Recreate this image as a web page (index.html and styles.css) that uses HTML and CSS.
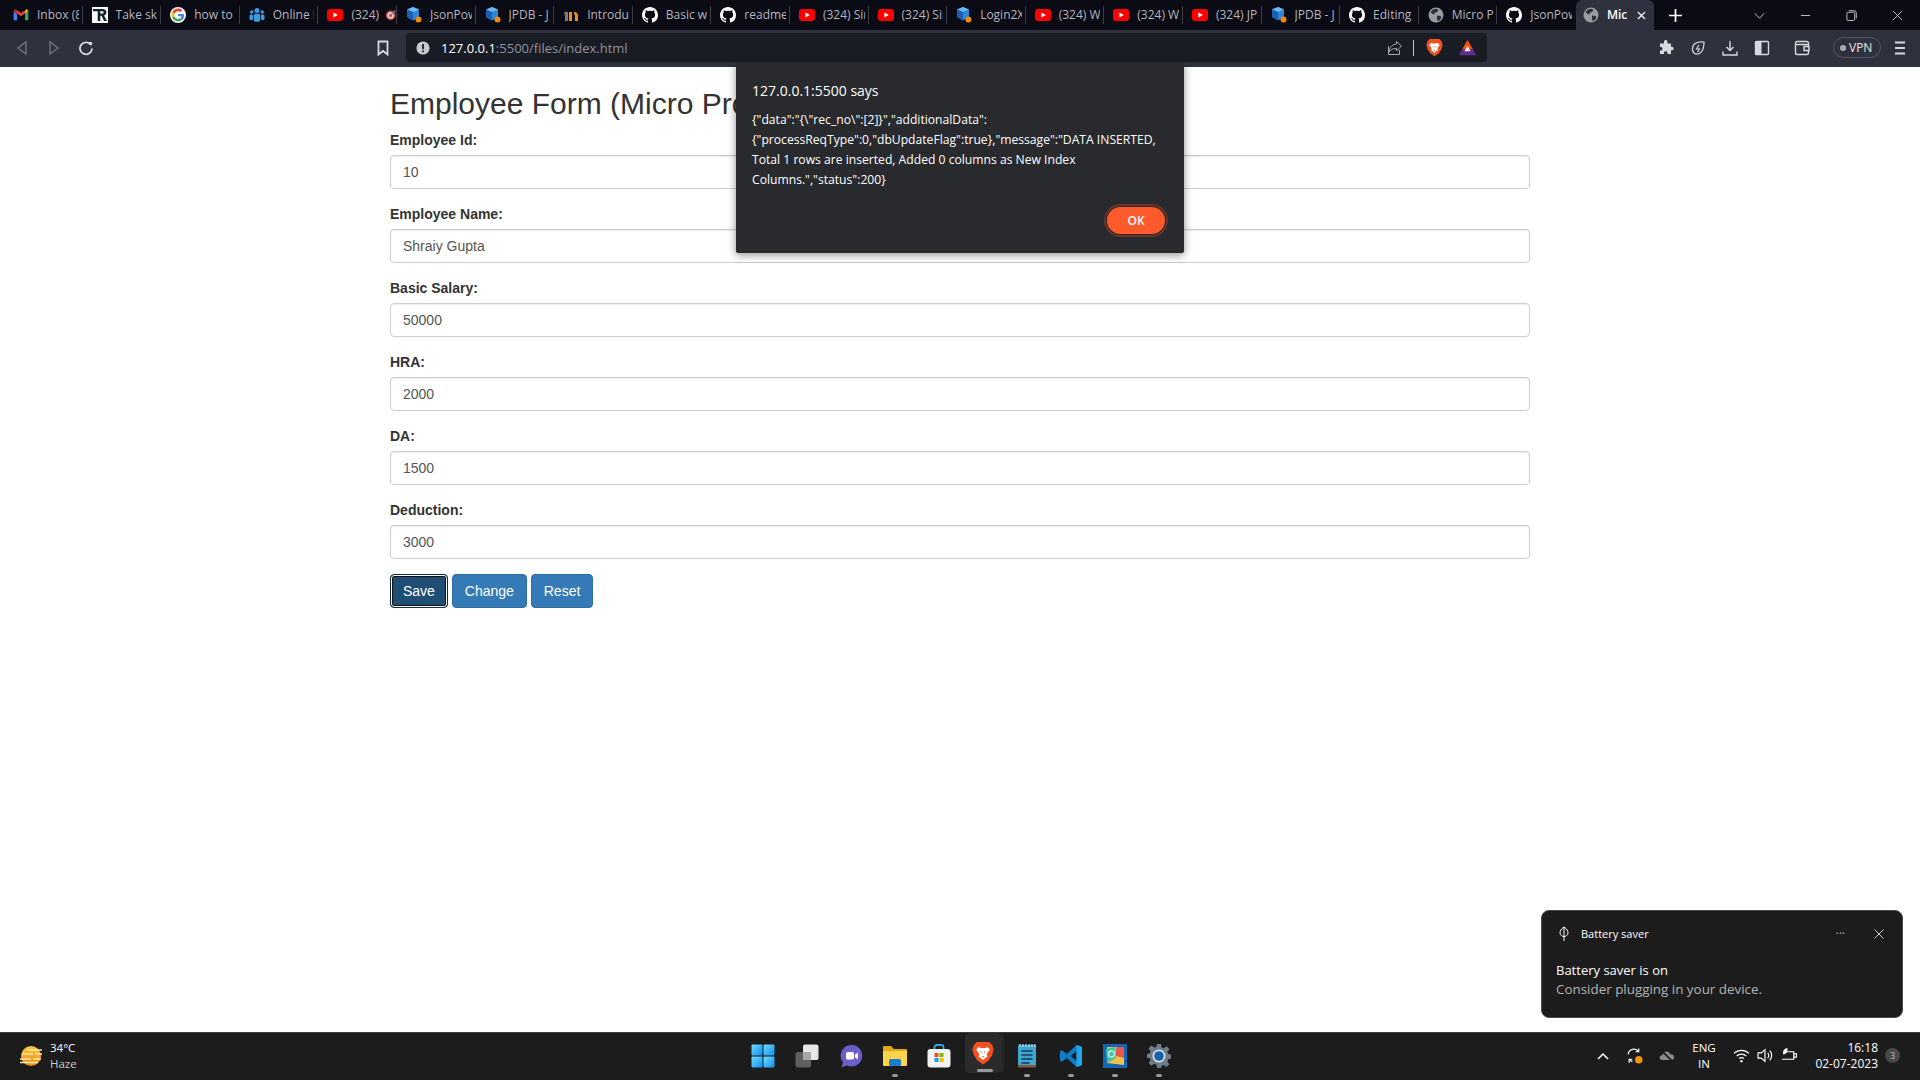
FILE: index.html
```html
<!DOCTYPE html>
<html lang="en">
<head>
<meta charset="UTF-8">
<title>Micro Project</title>
<link rel="stylesheet" href="styles.css">
</head>
<body>
<svg class="defs" width="0" height="0">
    <symbol id="gmail" viewBox="0 0 24 24">
        <path fill="#4285f4" d="M1 6v14h5V10z"/>
        <path fill="#34a853" d="M18 10v10h5V6z"/>
        <path fill="#ea4335" d="M1 6l11 8 11-8-2.5-2.5L12 9 3.500 3.500z"/>
        <path fill="#fbbc04" d="M18 6.500V10l5-4-2.500-2.500z"/>
        <path fill="#c5221f" d="M1 6l5 4V6.500L3.500 3.500z"/>
    </symbol>
    <symbol id="rtile" viewBox="0 0 16 16">
        <rect width="16" height="16" fill="#fff"/>
        <path fill="#10242f" d="M1 2h9.500c2.500 0 4 1.300 4 3.300 0 1.600-1 2.700-2.400 3.100L15 14h-3l-2.500-5.300H8.300V14H5.700V4.300H1zm7.300 2.300v2.300h1.800c.9 0 1.500-.4 1.500-1.200 0-.7-.6-1.100-1.500-1.100z"/>
    </symbol>
    <symbol id="google" viewBox="-6 -6 60 60">
        <circle cx="24" cy="24" r="30" fill="#fff"/>
        <path fill="#ea4335" d="M24 9.500c3.540 0 6.710 1.220 9.210 3.600l6.850-6.850C35.900 2.380 30.470 0 24 0 14.620 0 6.510 5.380 2.560 13.220l7.980 6.190C12.430 13.720 17.740 9.500 24 9.500z"/>
        <path fill="#4285f4" d="M46.980 24.550c0-1.570-.15-3.090-.38-4.550H24v9.020h12.940c-.58 2.960-2.260 5.480-4.780 7.180l7.730 6c4.510-4.180 7.090-10.360 7.090-17.650z"/>
        <path fill="#fbbc05" d="M10.530 28.590c-.48-1.450-.76-2.990-.76-4.590s.27-3.140.76-4.590l-7.980-6.190C.92 16.460 0 20.120 0 24c0 3.880.92 7.540 2.560 10.780l7.970-6.190z"/>
        <path fill="#34a853" d="M24 48c6.480 0 11.930-2.130 15.890-5.810l-7.730-6c-2.150 1.450-4.920 2.300-8.160 2.300-6.260 0-11.570-4.220-13.470-9.910l-7.980 6.190C6.510 42.620 14.620 48 24 48z"/>
    </symbol>
    <symbol id="group" viewBox="0 0 16 16">
        <g fill="#3d9be0">
            <circle cx="8" cy="3.500" r="2.500"/>
            <circle cx="2.800" cy="5" r="1.800"/>
            <circle cx="13.200" cy="5" r="1.800"/>
            <rect x="4.800" y="6.800" width="6.400" height="8" rx="1.800"/>
            <rect x="0.500" y="7.500" width="3.500" height="5.500" rx="1.200"/>
            <rect x="12" y="7.500" width="3.500" height="5.500" rx="1.200"/>
        </g>
    </symbol>
    <symbol id="youtube" viewBox="0 0 16 12">
        <rect width="16" height="12" rx="3" fill="#f00"/>
        <path fill="#fff" d="M6.400 3.400 10.800 6l-4.400 2.600z"/>
    </symbol>
    <symbol id="target" viewBox="0 0 16 16">
        <circle cx="7.500" cy="8.500" r="6.500" fill="#c8473f"/>
        <circle cx="7.500" cy="8.500" r="4.200" fill="#e8e4dc"/>
        <circle cx="7.500" cy="8.500" r="2.200" fill="#c8473f"/>
        <path d="M8 8l6-6" stroke="#4d8fb0" stroke-width="1.600"/>
    </symbol>
    <symbol id="cube" viewBox="0 0 16 16">
        <path fill="#2f86d8" d="M7 0l6 2.500V10l-6 3.500L1 10V2.500z"/>
        <path fill="#6cb8f0" d="M7 0l6 2.500L7 5 1 2.500z"/>
        <path fill="#1c5fb0" d="M7 5v8.500L1 10V2.500z"/>
        <circle cx="12.500" cy="12.500" r="3" fill="#f08a10"/>
    </symbol>
    <symbol id="intro" viewBox="0 0 16 16">
        <path fill="#f28a1e" d="M6 5h3v9H6zm5 0c2 0 4 1 4 3.500V14h-3V9c0-1-.5-1.500-1-1.500z"/>
        <path fill="#7a7a7a" d="M1 6.500C1 5 2.500 4.500 5 5v9H2V7.500z"/>
    </symbol>
    <symbol id="github" viewBox="0 0 16 16">
        <path fill="#fff" d="M8 0C3.580 0 0 3.580 0 8c0 3.540 2.290 6.530 5.470 7.590.4.070.55-.17.55-.38 0-.19-.01-.82-.01-1.490-2.010.37-2.530-.49-2.690-.94-.09-.23-.48-.94-.82-1.130-.28-.15-.68-.52-.01-.53.63-.01 1.080.58 1.230.82.72 1.210 1.870.87 2.330.66.070-.52.280-.87.510-1.070-1.780-.2-3.640-.89-3.640-3.950 0-.87.310-1.590.820-2.150-.080-.2-.360-1.020.080-2.120 0 0 .67-.21 2.200.82.640-.18 1.320-.27 2-.27.680 0 1.360.090 2 .27 1.530-1.040 2.200-.82 2.200-.82.440 1.100.160 1.920.080 2.120.510.560.820 1.270.820 2.150 0 3.070-1.870 3.750-3.650 3.950.290.250.540.730.540 1.480 0 1.070-.010 1.930-.010 2.200 0 .210.150.460.550.380A8.013 8.013 0 0016 8c0-4.420-3.580-8-8-8z"/>
    </symbol>
    <symbol id="globe" viewBox="0 0 16 16">
        <circle cx="8" cy="8" r="7.500" fill="#9a9ca4"/>
        <path fill="#2c2e38" d="M5 2.500l3.500-.7 2 1.200-1.500 2-2 .5-.5 2-2.500-1L2.500 5zM9 8.500l3.500.5 1 1.500-2 3-2 .5-.5-3z"/>
    </symbol>
    <symbol id="lion" viewBox="0 0 24 26">
        <path fill="#f1501f" d="M5 1h14l3 3.500L23.500 9l-1.700 6.500L18 21l-6 4.500L6 21l-3.800-5.500L.5 9 2 4.500z"/>
        <path fill="#fff" d="M7 6.500l2.500 1h5l2.500-1 2.300 2.800-2.600 3.800-.7 1.900 1 1.500L12 20.500 7 16.500l1-1.500-.7-1.900-2.600-3.800z"/>
        <path fill="#f1501f" d="M9.500 11l1.800 1-.8 1.200zM14.500 11l-1.800 1 .8 1.200zM10.300 16.500h3.400L12 18z"/>
    </symbol>
    <symbol id="bat" viewBox="0 0 24 22">
        <path fill="#662d91" d="M12 0 24 21H0z"/>
        <path fill="#ff5000" d="M12 0l7 12.500H5z"/>
        <path fill="#fff" d="M12 8l4 7.500H8z"/>
    </symbol>
    <symbol id="windows" viewBox="0 0 24 24">
        <defs>
            <linearGradient id="wg" x1="0" y1="0" x2="1" y2="1">
                <stop offset="0" stop-color="#6fdcff"/>
                <stop offset="1" stop-color="#0f8ff0"/>
            </linearGradient>
        </defs>
        <rect x="0.500" y="0.500" width="11" height="11" rx="1" fill="url(#wg)"/>
        <rect x="12.500" y="0.500" width="11" height="11" rx="1" fill="url(#wg)"/>
        <rect x="0.500" y="12.500" width="11" height="11" rx="1" fill="url(#wg)"/>
        <rect x="12.500" y="12.500" width="11" height="11" rx="1" fill="url(#wg)"/>
    </symbol>
    <symbol id="taskview" viewBox="0 0 24 24">
        <rect x="0.500" y="8" width="15.500" height="15.500" rx="2" fill="#5f5f5f"/>
        <rect x="8" y="0.500" width="15.500" height="15.500" rx="2" fill="#e6e6e6"/>
        <rect x="8" y="8" width="8" height="8" fill="#a8a8a8"/>
    </symbol>
    <symbol id="chat" viewBox="0 0 24 24">
        <path fill="#6a5fc8" d="M12.500 1a10.800 10.800 0 1 1-4.800 20.500L2.500 23.500l1.500-5A10.800 10.800 0 0 1 12.500 1z"/>
        <rect x="7" y="8" width="8" height="7.500" rx="1.500" fill="#fff"/>
        <path fill="#fff" d="M16 10.500l3-2v7l-3-2z"/>
    </symbol>
    <symbol id="folder" viewBox="0 0 24 24">
        <path fill="#e3a617" d="M0 3a1 1 0 0 1 1-1h7l3 3h12a1 1 0 0 1 1 1v3H0z"/>
        <path fill="#fbd34c" d="M0 7h24v14a1 1 0 0 1-1 1H1a1 1 0 0 1-1-1z"/>
        <rect x="6" y="15" width="12" height="7" rx="1.500" fill="#1a7fd0"/>
    </symbol>
    <symbol id="store" viewBox="0 0 24 24">
        <path fill="none" stroke="#2da5e8" stroke-width="1.800" d="M7.500 6V3a2 2 0 0 1 2-2h5a2 2 0 0 1 2 2v3"/>
        <rect x="0.500" y="5" width="23" height="18.500" rx="3" fill="#f2f2f2"/>
        <rect x="7.500" y="9" width="4" height="4" fill="#f25022"/>
        <rect x="12.500" y="9" width="4" height="4" fill="#7fba00"/>
        <rect x="7.500" y="14" width="4" height="4" fill="#00a4ef"/>
        <rect x="12.500" y="14" width="4" height="4" fill="#ffb900"/>
    </symbol>
    <symbol id="notepad" viewBox="0 0 24 24">
        <rect x="3" y="1" width="18" height="22" rx="1.500" fill="#3ea6d0"/>
        <rect x="3" y="21" width="18" height="2.500" fill="#8a5a34"/>
        <path stroke="#153e55" stroke-width="1.600" d="M6.500 7h11M6.500 11h11M6.500 15h11M6.500 19h8"/>
        <path stroke="#bfe4f2" stroke-width="1.200" d="M5 0v3M8 0v3M11 0v3M14 0v3M17 0v3M20 0v3"/>
    </symbol>
    <symbol id="vscode" viewBox="0 0 24 24">
        <path fill="#0d7cc6" d="M17.500 1 7.800 10 3 6.300 1 7.300v9.400l2 1 4.800-3.700 9.700 9L23 21V3zM17.500 7v10l-6-5z"/>
        <path fill="#22a3ea" d="M17.500 1 23 3v18l-5.500 2z"/>
    </symbol>
    <symbol id="paint" viewBox="0 0 24 24">
        <rect width="24" height="24" fill="#1665b5"/>
        <path fill="#f0c04c" d="M4 3h17v18L4 19z"/>
        <path fill="#e45a4a" d="M13 3h8v11l-8-2z"/>
        <path fill="#3ec4a4" d="M3 5l9-2 1 11-9 5z"/>
        <circle cx="8.500" cy="10" r="3" fill="none" stroke="#bdeedd" stroke-width="1.500"/>
    </symbol>
    <symbol id="gear" viewBox="0 0 24 24">
        <path fill="#6f7c8c" d="M10 0h4l.6 3.400 2.200.9 2.800-2 2.800 2.800-2 2.800.9 2.200 3.400.6v4l-3.400.6-.9 2.200 2 2.800-2.800 2.800-2.800-2-2.200.9L14 24h-4l-.6-3.400-2.200-.9-2.800 2-2.800-2.800 2-2.800-.9-2.200L-.7 14v-4l3.400-.6.900-2.200-2-2.800 2.800-2.800 2.800 2 2.200-.9z"/>
        <circle cx="12" cy="12" r="6.500" fill="#dfe6ee"/>
        <circle cx="12" cy="12" r="4.800" fill="#1560ac"/>
    </symbol>
    <symbol id="sun" viewBox="0 0 24 24">
        <defs>
            <linearGradient id="sg" x1="0" y1="0" x2="0" y2="1">
                <stop offset="0" stop-color="#ffc83a"/>
                <stop offset="1" stop-color="#f08a10"/>
            </linearGradient>
        </defs>
        <circle cx="12" cy="12" r="10" fill="url(#sg)"/>
        <path stroke="#ffe9b0" stroke-width="1.400" d="M8 6h15M3 10h11M16 10h7M1 15h11M14 15h8M1 18.500h18"/>
    </symbol>
</svg>

<div class="tabstrip">
    <div class="tab"><svg class="fav"><use href="#gmail"/></svg><span>Inbox (8</span></div>
    <div class="tab"><svg class="fav"><use href="#rtile"/></svg><span>Take skil</span></div>
    <div class="tab"><svg class="fav"><use href="#google"/></svg><span>how to a</span></div>
    <div class="tab"><svg class="fav"><use href="#group"/></svg><span>Online P</span></div>
    <div class="tab"><svg class="fav"><use href="#youtube"/></svg><span class="short">(324)</span><svg class="fav small"><use href="#target"/></svg></div>
    <div class="tab"><svg class="fav"><use href="#cube"/></svg><span>JsonPow</span></div>
    <div class="tab"><svg class="fav"><use href="#cube"/></svg><span>JPDB - J</span></div>
    <div class="tab"><svg class="fav"><use href="#intro"/></svg><span>Introduc</span></div>
    <div class="tab"><svg class="fav"><use href="#github"/></svg><span>Basic wr</span></div>
    <div class="tab"><svg class="fav"><use href="#github"/></svg><span>readme-</span></div>
    <div class="tab"><svg class="fav"><use href="#youtube"/></svg><span>(324) Sir</span></div>
    <div class="tab"><svg class="fav"><use href="#youtube"/></svg><span>(324) Sir</span></div>
    <div class="tab"><svg class="fav"><use href="#cube"/></svg><span>Login2X</span></div>
    <div class="tab"><svg class="fav"><use href="#youtube"/></svg><span>(324) W</span></div>
    <div class="tab"><svg class="fav"><use href="#youtube"/></svg><span>(324) W</span></div>
    <div class="tab"><svg class="fav"><use href="#youtube"/></svg><span>(324) JP</span></div>
    <div class="tab"><svg class="fav"><use href="#cube"/></svg><span>JPDB - J</span></div>
    <div class="tab"><svg class="fav"><use href="#github"/></svg><span>Editing I</span></div>
    <div class="tab"><svg class="fav"><use href="#globe"/></svg><span>Micro Pr</span></div>
    <div class="tab last"><svg class="fav"><use href="#github"/></svg><span>JsonPow</span></div>
    <div class="tab active"><svg class="fav"><use href="#globe"/></svg><span class="title">Mic</span>
        <svg class="tab-close" viewBox="0 0 10 10"><path d="M1 1l8 8M9 1l-8 8"/></svg>
    </div>
    <svg class="new-tab" viewBox="0 0 12 12"><path d="M6 0v12M0 6h12"/></svg>
    <div class="win-controls">
        <svg viewBox="0 0 12 12"><path d="M1 3.500l5 5.500 5-5.500"/></svg>
        <svg viewBox="0 0 12 12"><path d="M1 6h10"/></svg>
        <svg viewBox="0 0 12 12"><rect x="1" y="2.500" width="8.500" height="9" rx="1.500"/><path d="M3 .8h5.500A2.500 2.500 0 0 1 11.200 3.300v6"/></svg>
        <svg viewBox="0 0 12 12"><path d="M1 1l10 10M11 1L1 11"/></svg>
    </div>
</div>

<div class="toolbar">
    <svg class="tool back dim" viewBox="0 0 14 16"><path d="M11 2v12L3 8z"/></svg>
    <svg class="tool forward dim" viewBox="0 0 14 16"><path d="M3 2v12l8-6z"/></svg>
    <svg class="tool reload" viewBox="0 0 16 16"><path d="M13 5a6 6 0 1 0 1 3.500"/><circle cx="12.500" cy="3.500" r="1.800" class="solid"/></svg>
    <svg class="tool bookmark" viewBox="0 0 14 16"><path d="M2.500 1.500h9v13L7 11l-4.500 3.500z"/></svg>
    <div class="urlbar">
        <svg class="info" viewBox="0 0 16 16"><circle cx="8" cy="8" r="7.500" fill="#c8cad0"/><path d="M7 3.500h2v6H7zM7 10.800h2v2H7z" fill="#1a1c25"/></svg>
        <span class="url"><b>127.0.0.1</b>:5500/files/index.html</span>
        <svg class="tool share" viewBox="0 0 16 16"><path d="M14.500 6 9.500 1.500V4C5 4.500 2.500 7.500 2 12c1.800-2.500 4-3.500 7.500-3.500V11zM1.500 6v8.500h11V10"/></svg>
        <span class="url-divider"></span>
        <svg class="shield" viewBox="0 0 24 26"><use href="#lion"/></svg>
        <svg class="bat" viewBox="0 0 24 22"><use href="#bat"/></svg>
    </div>
    <svg class="tool puzzle" viewBox="0 0 16 16"><path class="solid" d="M6 1.500a1.800 1.800 0 0 1 3.500 0V3.500H13v3.300h1.300a1.800 1.800 0 0 1 0 3.500H13V14H9.500v-1.300a1.800 1.800 0 0 0-3.500 0V14H2v-3.500h1.200a1.800 1.800 0 0 0 0-3.500H2V3.500h4z"/></svg>
    <svg class="tool leaf" viewBox="0 0 16 16"><path d="M14 2C8 1.500 3 3 2.500 8c-.3 3 1 5 3 6 5 .5 8.500-3 8.500-12zM9 5 6.500 9h3L7.500 12"/></svg>
    <svg class="tool download" viewBox="0 0 16 16"><path d="M8 1v9M4.500 7 8 10.500 11.500 7M1 11.500V15h14v-3.500"/></svg>
    <svg class="tool sidebar" viewBox="0 0 16 16"><rect x="1.500" y="1.500" width="13" height="13" rx="1"/><rect x="1.500" y="1.500" width="6" height="13" class="solid"/></svg>
    <svg class="tool wallet" viewBox="0 0 16 16"><path d="M14.500 5V3a1.500 1.500 0 0 0-1.500-1.500H3A1.500 1.500 0 0 0 1.500 3v10A1.500 1.500 0 0 0 3 14.500h10a1.500 1.500 0 0 0 1.500-1.500v-2M1.500 4.500h13v2M10 6.500h5v4h-5z"/></svg>
    <div class="vpn"><i></i>VPN</div>
    <svg class="tool menu" viewBox="0 0 14 16"><path d="M2 2.500h10M2 8h10M2 13.500h10"/></svg>
</div>

<div class="page">
    <div class="container">
        <h2>Employee Form (Micro Project)</h2>
        <form>
            <div class="form-group">
                <label>Employee Id:</label>
                <input class="form-control" type="text" value="10">
            </div>
            <div class="form-group">
                <label>Employee Name:</label>
                <input class="form-control" type="text" value="Shraiy Gupta">
            </div>
            <div class="form-group">
                <label>Basic Salary:</label>
                <input class="form-control" type="text" value="50000">
            </div>
            <div class="form-group">
                <label>HRA:</label>
                <input class="form-control" type="text" value="2000">
            </div>
            <div class="form-group">
                <label>DA:</label>
                <input class="form-control" type="text" value="1500">
            </div>
            <div class="form-group">
                <label>Deduction:</label>
                <input class="form-control" type="text" value="3000">
            </div>
            <button type="button" class="btn focused">Save</button>
            <button type="button" class="btn">Change</button>
            <button type="button" class="btn">Reset</button>
        </form>
    </div>
</div>

<div class="taskbar">
    <div class="weather">
        <svg class="sun"><use href="#sun"/></svg>
        <div class="weather-text">
            <div>34°C</div>
            <div class="muted">Haze</div>
        </div>
    </div>
    <div class="task-icons">
        <div class="task"><svg><use href="#windows"/></svg></div>
        <div class="task"><svg><use href="#taskview"/></svg></div>
        <div class="task"><svg><use href="#chat"/></svg></div>
        <div class="task open"><svg><use href="#folder"/></svg></div>
        <div class="task"><svg><use href="#store"/></svg></div>
        <div class="task current"><svg><use href="#lion"/></svg></div>
        <div class="task open"><svg><use href="#notepad"/></svg></div>
        <div class="task open"><svg><use href="#vscode"/></svg></div>
        <div class="task open"><svg><use href="#paint"/></svg></div>
        <div class="task open"><svg><use href="#gear"/></svg></div>
    </div>
    <div class="tray">
        <svg class="tray-ico chevron" viewBox="0 0 12 8"><path d="M1 7l5-5 5 5"/></svg>
        <svg class="tray-ico sync" viewBox="0 0 16 16"><path d="M2 7a5.500 5.500 0 0 1 10-2.500M12 1.500v3H9M3 15v-3.500h3M3 11.500 6 14"/><circle cx="12" cy="12" r="3.500" fill="#f7930e" stroke="none"/></svg>
        <svg class="tray-ico cloud" viewBox="0 0 16 16"><path class="cloud-fill" d="M4 13a3 3 0 0 1-.5-6 4.500 4.500 0 0 1 8.500-1 3.500 3.500 0 0 1 .5 7z"/><path d="M2 2l12 12"/></svg>
        <div class="lang">ENG<br>IN</div>
        <svg class="tray-ico wifi" viewBox="0 0 16 16"><path d="M1 6a10 10 0 0 1 14 0M3.500 8.500a6.500 6.500 0 0 1 9 0M5.800 11a3 3 0 0 1 4.400 0"/><circle cx="8" cy="13.300" r="1.100" fill="#fff" stroke="none"/></svg>
        <svg class="tray-ico speaker" viewBox="0 0 16 16"><path d="M1 5.500h3L7.500 2.500v11L4 10.500H1zM10 5.500a3.500 3.500 0 0 1 0 5M12 3.500a6.500 6.500 0 0 1 0 9"/></svg>
        <svg class="tray-ico battery" viewBox="0 0 16 16"><path d="M4 4.500h8v7H1M12 6.500h2.500v3H12"/><path d="M6 1C3 1.500 1.500 3.500 2 7c3 0 4.500-2.500 4-6z" fill="#fff" stroke="none"/></svg>
        <div class="clock">16:18<br>02-07-2023</div>
        <div class="badge">3</div>
    </div>
</div>

<div class="dialog">
    <div class="dialog-title">127.0.0.1:5500 says</div>
    <div class="dialog-msg">{"data":"{\"rec_no\":[2]}","additionalData":<br>{"processReqType":0,"dbUpdateFlag":true},"message":"DATA INSERTED,<br>Total 1 rows are inserted, Added 0 columns as New Index<br>Columns.","status":200}</div>
    <div class="dialog-actions"><button type="button" class="ok">OK</button></div>
</div>

<div class="toast">
    <div class="toast-head">
        <svg class="toast-leaf" viewBox="0 0 12 16"><path d="M6 1C3 3 2 5 2 7c0 2 2 3.500 4 3.500S10 9 10 7C10 5 9 3 6 1zM6 1v14"/></svg>
        <span class="toast-app">Battery saver</span>
        <span class="toast-more">···</span>
        <svg class="toast-x" viewBox="0 0 10 10"><path d="M.5.5l9 9M9.500.5l-9 9"/></svg>
    </div>
    <div class="toast-title">Battery saver is on</div>
    <div class="toast-sub">Consider plugging in your device.</div>
</div>
</body>
</html>
```
FILE: styles.css
```css
* {
    box-sizing: border-box;
}
body {
    margin: 0;
    height: 1080px;
    overflow: hidden;
    display: flex;
    flex-direction: column;
    font-family: "Liberation Sans", Arial, sans-serif;
    font-size: 14px;
    line-height: 20px;
    color: #333;
    background-color: #fff;
}
.defs {
    position: absolute;
}

/* tab strip */
.tabstrip {
    display: flex;
    align-items: center;
    height: 30px;
    padding-left: 4px;
    background-color: #0a0b14;
    font-family: "Open Sans", "Noto Sans", sans-serif;
    font-size: 12px;
    color: #b4b6bf;
}
.tab {
    display: flex;
    align-items: center;
    flex: 0 0 78.6px;
    height: 30px;
    padding-left: 9px;
    overflow: hidden;
    white-space: nowrap;
    position: relative;
}
.tab::after {
    content: "";
    position: absolute;
    right: 0;
    top: 6px;
    width: 1px;
    height: 18px;
    background-color: #3c3e48;
}
.tab.last::after,
.tab.active::after {
    display: none;
}
.fav {
    flex: none;
    width: 16px;
    height: 16px;
    margin-right: 8px;
}
.fav.small {
    width: 12px;
    height: 12px;
    margin: 0 0 0 6px;
}
.tab span {
    flex: 1;
    overflow: hidden;
    margin-right: 4px;
}
.tab span.short {
    flex: none;
    margin: 0;
}
.tab.active {
    padding-left: 7px;
    background-color: #2f323e;
    border-radius: 6px 6px 0 0;
    color: #fff;
    font-weight: 600;
}
.tab-close {
    flex: none;
    width: 9px;
    height: 9px;
    margin-right: 8px;
    fill: none;
    stroke: #eee;
    stroke-width: 1.500;
}
.new-tab {
    width: 13px;
    height: 13px;
    margin-left: 15px;
    fill: none;
    stroke: #fff;
    stroke-width: 1.600;
}
.win-controls {
    display: flex;
    align-items: center;
    gap: 35px;
    margin-left: auto;
    padding-right: 17px;
}
.win-controls svg {
    width: 11px;
    height: 11px;
    fill: none;
    stroke: #c9cad0;
    stroke-width: 1;
}

/* toolbar */
.toolbar {
    display: flex;
    align-items: center;
    height: 37px;
    padding-bottom: 2px;
    background-color: #2f323e;
}
.tool {
    flex: none;
    width: 16px;
    height: 16px;
    fill: none;
    stroke: #d8d9de;
    stroke-width: 1.400;
}
.tool .solid {
    fill: #d8d9de;
    stroke: none;
}
.tool.dim {
    stroke: #70727c;
}
.back {
    margin-left: 14px;
}
.forward {
    margin-left: 16px;
}
.reload {
    margin-left: 16px;
    stroke-width: 1.800;
}
.bookmark {
    margin-left: 281px;
    stroke-width: 1.800;
}
.urlbar {
    flex: none;
    display: flex;
    align-items: center;
    width: 1081px;
    height: 29px;
    margin-left: 15px;
    padding: 0 10px 0 10px;
    background-color: #1a1c25;
    border-radius: 4px;
    color: #8f919b;
    font-family: "Open Sans", "Noto Sans", sans-serif;
    font-size: 13px;
}
.info {
    flex: none;
    width: 14px;
    height: 14px;
    margin-right: 11px;
}
.url b {
    color: #fff;
    font-weight: 400;
}
.share {
    margin-left: auto;
    stroke: #a9abb4;
    stroke-width: 1;
}
.url-divider {
    width: 1px;
    height: 16px;
    margin: 0 12px 0 10px;
    background-color: #c8c9ce;
}
.shield {
    width: 17px;
    height: 19px;
}
.bat {
    width: 19px;
    height: 16px;
    margin-left: 15px;
}
.puzzle {
    margin-left: 171px;
}
.leaf {
    margin-left: 16px;
    stroke-width: 1.200;
}
.download {
    margin-left: 16px;
}
.sidebar {
    margin-left: 16px;
}
.wallet {
    margin-left: 24px;
}
.vpn {
    flex: none;
    display: flex;
    align-items: center;
    gap: 3px;
    width: 48px;
    height: 21px;
    margin-left: 23px;
    padding-left: 6px;
    border: 1px solid #555863;
    border-radius: 11px;
    color: #e4e5e9;
    font-family: "Open Sans", "Noto Sans", sans-serif;
    font-size: 12px;
}
.vpn i {
    width: 6px;
    height: 6px;
    border-radius: 50%;
    background-color: #a9abb4;
}
.menu {
    margin-left: 11px;
    stroke-width: 1.800;
}

/* page */
.page {
    flex: 1;
    background-color: #fff;
}
.container {
    width: 1170px;
    margin: 0 auto;
    padding: 0 15px;
}
h2 {
    margin: 20px 0 10px;
    font-size: 30px;
    font-weight: 500;
    line-height: 33px;
}
.form-group {
    margin-bottom: 15px;
}
label {
    display: inline-block;
    margin-bottom: 5px;
    font-weight: 700;
}
.form-control {
    display: block;
    width: 100%;
    height: 34px;
    padding: 6px 12px;
    font-family: inherit;
    font-size: 14px;
    color: #555;
    background-color: #fff;
    border: 1px solid #ccc;
    border-radius: 4px;
    box-shadow: inset 0 1px 1px rgba(0,0,0,0.075);
}
.btn {
    height: 34px;
    padding: 6px 12px;
    font-family: inherit;
    font-size: 14px;
    line-height: 20px;
    color: #fff;
    background-color: #337ab7;
    border: 1px solid #2e6da4;
    border-radius: 4px;
}
.btn.focused {
    background-color: #204d74;
    border: 1px solid #122b40;
    box-shadow: inset 0 0 0 1px #fff, inset 0 0 0 2px #111;
}

/* taskbar */
.taskbar {
    display: grid;
    grid-template-columns: 1fr auto 1fr;
    align-items: center;
    height: 48px;
    padding-bottom: 2px;
    background-color: #1c1c1c;
    border-top: 1px solid #3b3b3b;
    font-family: "Open Sans", "Noto Sans", sans-serif;
    font-size: 11.500px;
    line-height: 16px;
    color: #fff;
}
.weather {
    display: flex;
    align-items: center;
    padding-left: 19px;
}
.sun {
    width: 24px;
    height: 24px;
    margin-right: 7px;
}
.muted {
    color: #c9c9c9;
}
.task-icons {
    display: flex;
    margin-left: 2px;
}
.task {
    position: relative;
    display: flex;
    align-items: center;
    justify-content: center;
    width: 44px;
    height: 45px;
}
.task svg {
    width: 24px;
    height: 24px;
}
.task.open::after,
.task.current::after {
    content: "";
    position: absolute;
    bottom: 1px;
    left: 19px;
    width: 6px;
    height: 3px;
    border-radius: 2px;
    background-color: #9a9a9a;
}
.task.current {
    background-color: #2b2b2b;
    border-radius: 5px;
    width: 36px;
    height: 40px;
    margin: 0 4px;
    box-shadow: 4px 0 0 -1px #262626;
}
.task.current::after {
    left: 12px;
    width: 16px;
}
.tray {
    display: flex;
    align-items: center;
    justify-content: flex-end;
    padding-right: 20px;
}
.tray-ico {
    flex: none;
    width: 17px;
    height: 17px;
    fill: none;
    stroke: #fff;
    stroke-width: 1.100;
}
.chevron {
    width: 12px;
    height: 8px;
    stroke-width: 1.500;
}
.sync {
    margin-left: 17px;
}
.cloud {
    margin-left: 15px;
    stroke: #1c1c1c;
    stroke-width: 1.500;
}
.cloud-fill {
    fill: #8a8a8a;
}
.lang {
    width: 46px;
    margin-left: 6px;
    text-align: center;
}
.wifi {
    margin-left: 6px;
}
.speaker {
    margin-left: 7px;
}
.battery {
    margin-left: 7px;
}
.clock {
    width: 72px;
    margin-left: 8px;
    font-size: 12px;
    text-align: right;
}
.badge {
    flex: none;
    width: 15px;
    height: 15px;
    margin-left: 7px;
    border-radius: 50%;
    background-color: #4a4a4a;
    color: #bbb;
    font-size: 9px;
    line-height: 15px;
    text-align: center;
}

/* alert dialog */
.dialog {
    position: absolute;
    left: 736px;
    top: 63px;
    width: 448px;
    height: 190px;
    padding: 16px 16px 0;
    background-color: #292a2e;
    border-radius: 2px;
    box-shadow: 0 2px 8px rgba(0,0,0,0.45);
    font-family: "Open Sans", "Noto Sans", sans-serif;
    color: #fff;
}
.dialog-title {
    font-size: 14px;
    line-height: 24px;
}
.dialog-msg {
    margin-top: 7px;
    font-size: 12.150px;
    line-height: 20px;
}
.dialog-actions {
    display: flex;
    justify-content: flex-end;
    margin-top: 17px;
    padding-right: 3px;
}
.ok {
    width: 58px;
    height: 27px;
    padding: 0;
    font-family: inherit;
    font-size: 12px;
    font-weight: 600;
    color: #fff;
    background-color: #ff5a2b;
    border: none;
    border-radius: 14px;
    box-shadow: 0 0 0 1px #292a2e, 0 0 0 3px #6d3428;
}

/* notification */
.toast {
    position: absolute;
    left: 1541px;
    top: 910px;
    width: 362px;
    height: 108px;
    padding: 13px 14px;
    background-color: #1c1c1c;
    border: 1px solid #4a4a4a;
    border-radius: 8px;
    font-family: "Open Sans", "Noto Sans", sans-serif;
    color: #fff;
}
.toast-head {
    display: flex;
    align-items: center;
    height: 20px;
    font-size: 11px;
}
.toast-leaf {
    width: 12px;
    height: 16px;
    margin-left: 2px;
    fill: none;
    stroke: #fff;
    stroke-width: 1;
}
.toast-app {
    margin-left: 11px;
}
.toast-more {
    margin-left: auto;
    color: #aaa;
    font-size: 12px;
}
.toast-x {
    width: 10px;
    height: 10px;
    margin: 0 4px 0 29px;
    fill: none;
    stroke: #ccc;
    stroke-width: 1;
}
.toast-title {
    margin-top: 17px;
    font-size: 13px;
    line-height: 19px;
}
.toast-sub {
    font-size: 13.400px;
    line-height: 19px;
    color: #b5b5b5;
}
```
